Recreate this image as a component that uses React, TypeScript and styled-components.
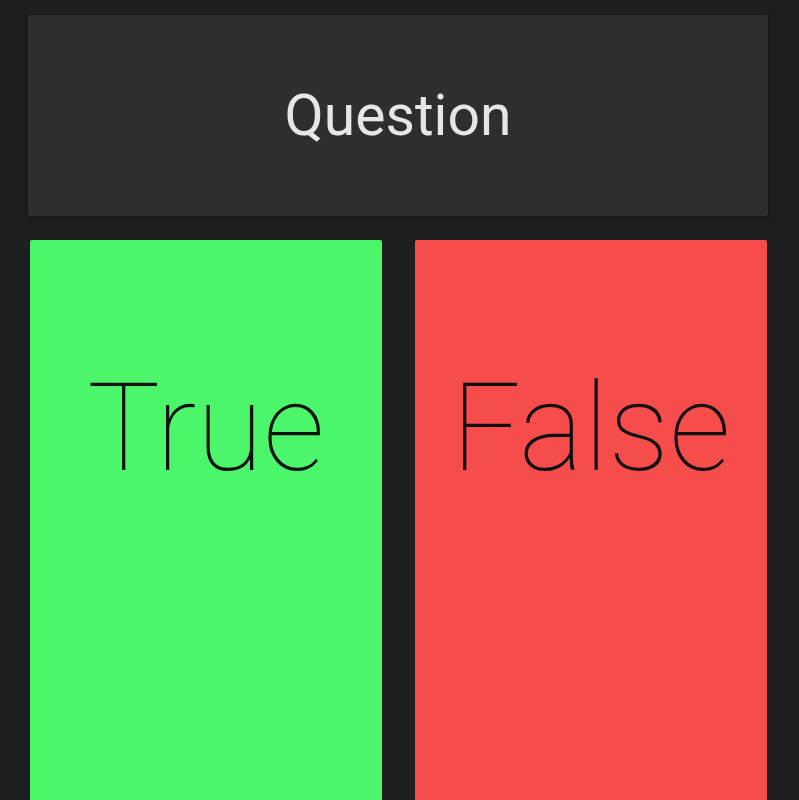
import React from "react";
import styled, { createGlobalStyle } from "styled-components";

const Global = createGlobalStyle`
  html, body { margin: 0; padding: 0; background: #1e1e1e; overflow: hidden; }
  * { box-sizing: border-box; }
`;

const Screen = styled.div`
  height: 100vh;
  overflow: hidden;
  background: #1e1e1e;
  padding: 15px 31px 0 28px;
  display: flex;
  flex-direction: column;
  gap: 24px;
  font-family: Roboto, "Noto Sans", sans-serif;
`;

const QuestionCard = styled.div`
  height: 201px;
  flex-shrink: 0;
  background: #2e2e2e;
  border-radius: 2px;
  box-shadow: 0 1px 3px rgba(0, 0, 0, 0.45);
  display: flex;
  align-items: center;
  justify-content: center;
  color: #e6e6e6;
  font-size: 57px;
  font-weight: 400;
`;

const Answers = styled.div`
  display: grid;
  grid-template-columns: 352px 352px;
  column-gap: 33px;
  padding-left: 2px;
`;

const AnswerButton = styled.button<{ $bg: string }>`
  height: 700px;
  border: none;
  border-radius: 2px;
  background: ${(p) => p.$bg};
  display: flex;
  justify-content: center;
  align-items: flex-start;
  padding: 117px 0 0;
  font-family: Roboto, "Noto Sans", sans-serif;
  font-weight: 100;
  font-size: 122px;
  line-height: normal;
  color: #111;
  cursor: pointer;
`;

export default function App() {
  return (
    <>
      <Global />
      <Screen>
        <QuestionCard>Question</QuestionCard>
        <Answers>
          <AnswerButton $bg="#4bf66b">True</AnswerButton>
          <AnswerButton $bg="#f64c4c">False</AnswerButton>
        </Answers>
      </Screen>
    </>
  );
}
